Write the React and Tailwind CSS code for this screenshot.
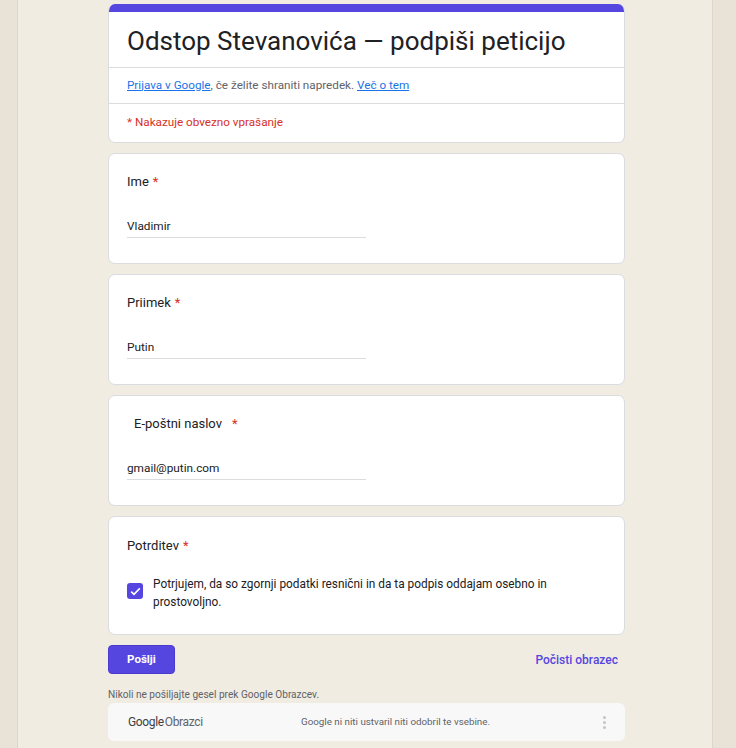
import React from "react";

const font = { fontFamily: "Roboto, 'Noto Sans', Arial, sans-serif" };

function Req() {
  return <span className="text-[#d93025] ml-[4px]">*</span>;
}

function TextQuestion({ label, value, height = "h-[111px]" }) {
  return (
    <div className={`bg-white border border-[#dadce0] rounded-[7px] ${height} pl-[18px] pt-[19px]`}>
      <div className="text-[13px] text-[#202124] leading-[18px]">{label}</div>
      <div className="mt-[28px] w-[239px] border-b border-[#dadce0] pb-[3px] text-[11.8px] text-[#202124] leading-[15px]">
        {value}
      </div>
    </div>
  );
}

export default function App() {
  return (
    <div style={font} className="w-[736px] h-[748px] flex bg-[#e9e3d7] overflow-hidden">
      <div className="w-[18px] shrink-0 border-r border-[#ddd6ca]" />
      <div className="w-[694px] shrink-0 bg-[#f0ece2] pl-[89px] pt-[4px]">
        <div className="w-[517px] ml-[1px] flex flex-col">
          {/* Header card */}
          <div className="bg-white border border-[#dadce0] border-t-0 rounded-[7px] overflow-hidden">
            <div className="h-[8px] bg-[#5646e0]" />
            <div className="h-[55px] pl-[18px] flex items-center text-[26px] text-[#202124] leading-[30px] pt-[2px]">
              Odstop Stevanovića — podpiši peticijo
            </div>
            <div className="h-[36px] border-t border-[#dadce0] pl-[18px] flex items-center text-[11.7px] text-[#5f6368]">
              <span className="text-[#1a73e8] underline">Prijava v Google</span>
              <span>, če želite shraniti napredek.&nbsp;</span>
              <span className="text-[#1a73e8] underline">Več o tem</span>
            </div>
            <div className="h-[39px] border-t border-[#dadce0] pl-[18px] flex items-center text-[11.7px] text-[#d93025]">
              * Nakazuje obvezno vprašanje
            </div>
          </div>

          <div className="mt-[10px]">
            <TextQuestion label={<>Ime<Req /></>} value="Vladimir" />
          </div>
          <div className="mt-[10px]">
            <TextQuestion label={<>Priimek<Req /></>} value="Putin" />
          </div>
          <div className="mt-[10px]">
            <TextQuestion
              label={<span className="pl-[7px]">E-poštni naslov<span className="text-[#d93025] ml-[10px]">*</span></span>}
              value="gmail@putin.com"
            />
          </div>

          {/* Confirmation */}
          <div className="mt-[10px] bg-white border border-[#dadce0] rounded-[7px] h-[119px] pl-[18px] pt-[20px]">
            <div className="text-[13px] text-[#202124] leading-[18px]">
              Potrditev<Req />
            </div>
            <div className="mt-[20px] flex items-start">
              <div className="mt-[8px] w-[16px] h-[16px] rounded-[3px] bg-[#5646e0] flex items-center justify-center shrink-0">
                <svg width="11" height="9" viewBox="0 0 11 9">
                  <path d="M1.2 4.6 L4 7.3 L9.8 1.4" fill="none" stroke="white" strokeWidth="1.6" />
                </svg>
              </div>
              <div className="ml-[10px] w-[420px] text-[11.85px] text-[#202124] leading-[18px]">
                Potrjujem, da so zgornji podatki resnični in da ta podpis oddajam osebno in prostovoljno.
              </div>
            </div>
          </div>

          {/* Buttons */}
          <div className="mt-[10px] flex items-center justify-between">
            <div className="w-[67px] h-[29px] rounded-[4px] bg-[#5646e0] text-white text-[11.5px] font-bold flex items-center justify-center border border-[#4a3bd0]">
              Pošlji
            </div>
            <div className="mr-[7px] text-[12px] font-medium text-[#5646e0]">Počisti obrazec</div>
          </div>

          <div className="mt-[14px] text-[10.1px] text-[#5f6368] leading-[14px]">
            Nikoli ne pošiljajte gesel prek Google Obrazcev.
          </div>

          {/* Footer */}
          <div className="mt-[1px] h-[38px] bg-[#f8f8f8] rounded-[6px] flex items-center pl-[20px] pr-[18px]">
            <div className="text-[12px] text-[#3c4043] tracking-[-0.35px] w-[80px]">
              Google<span className="ml-[1px] text-[#5f6368]">Obrazci</span>
            </div>
            <div className="ml-[93px] text-[9.8px] text-[#5f6368]">
              Google ni niti ustvaril niti odobril te vsebine.
            </div>
            <div className="ml-auto flex flex-col gap-[2px] mr-[1px]">
              <div className="w-[3px] h-[3px] rounded-full bg-[#c4c4c4]" />
              <div className="w-[3px] h-[3px] rounded-full bg-[#c4c4c4]" />
              <div className="w-[3px] h-[3px] rounded-full bg-[#c4c4c4]" />
            </div>
          </div>
        </div>
      </div>
      <div className="w-[23px] shrink-0 border-l border-[#ddd6ca]" />
    </div>
  );
}
